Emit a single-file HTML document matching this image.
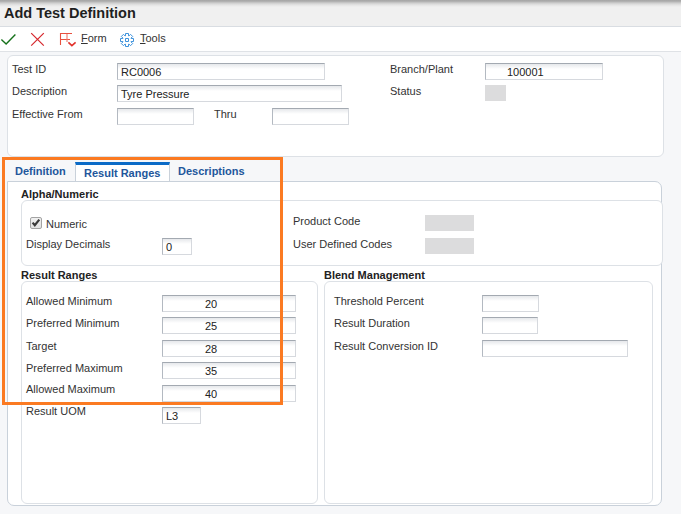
<!DOCTYPE html>
<html><head><meta charset="utf-8">
<style>
*{box-sizing:border-box;margin:0;padding:0}
html,body{width:681px;height:514px;overflow:hidden;background:#f6f7f9;font-family:"Liberation Sans",sans-serif;font-size:11px;color:#333}
.a{position:absolute;white-space:nowrap;line-height:13px}
#hdr{position:absolute;left:0;top:0;width:681px;height:27px;background:#f0f0f0;border-bottom:1px solid #d9dde2}
#shadow{position:absolute;left:0;top:0;width:681px;height:7px;background:linear-gradient(#a4a4a4,#b2b2b2 1.5px,#cdcdcd 3px,#e4e4e4 5px,#f0f0f0 7px)}
#title{position:absolute;left:4px;top:5px;font-size:14.5px;font-weight:bold;color:#1f1f1f;line-height:17px}
#tb{position:absolute;left:0;top:27px;width:681px;height:25px;background:#fff;border-bottom:1px solid #dfe2e6}
.box{position:absolute;background:#fff;border:1px solid #dde1e6;border-radius:6px}
.inp{position:absolute;border:1px solid #d6d9de;border-top-color:#a3a9b1;border-left-color:#b3b9c1;height:17px;background:linear-gradient(#e6e8eb,#fff 5px)}
.gray{position:absolute;background:#dcdcdd}
.lbl{position:absolute;white-space:nowrap;line-height:13px;color:#333}
.h{position:absolute;white-space:nowrap;line-height:13px;color:#222;font-weight:bold}
.tab{position:absolute;white-space:nowrap;line-height:13px;color:#22569b;font-weight:bold}
.val{position:absolute;white-space:nowrap;line-height:13px;color:#222}
</style></head><body>
<div id="hdr"></div>
<div id="shadow"></div>
<div id="title">Add Test Definition</div>
<div id="tb"></div>
<!-- toolbar icons -->
<svg style="position:absolute;left:0;top:28px" width="180" height="22" viewBox="0 28 180 22">
  <polyline points="1.4,39.5 6.1,43.9 15.4,34.4" fill="none" stroke="#15711a" stroke-width="1.4"/>
  <path d="M31.2,33.1 L43.8,45.6 M43.8,33.1 L31.2,45.6" stroke="#d6282e" stroke-width="1.25" fill="none"/>
  <path d="M60,33.5 H72 M60.5,33 V45 M60,39.5 H70" stroke="#e8503f" stroke-width="1.1" fill="none"/><path d="M67,34 V42" stroke="#ee7a6c" stroke-width="1.1" fill="none"/>
  <polyline points="68.4,42.3 71.9,45.6 75.6,42.4" fill="none" stroke="#e2312a" stroke-width="1.6"/>
  <g transform="translate(127,40)" fill="none" stroke="#3f93dc" stroke-width="1" stroke-linejoin="round">
    <path d="M-1.50,-4.14 L-1.50,-6.50 L1.50,-6.50 L1.50,-4.14 L1.86,-3.99 L3.54,-5.66 L5.66,-3.54 L3.99,-1.86 L4.14,-1.50 L6.50,-1.50 L6.50,1.50 L4.14,1.50 L3.99,1.86 L5.66,3.54 L3.54,5.66 L1.86,3.99 L1.50,4.14 L1.50,6.50 L-1.50,6.50 L-1.50,4.14 L-1.86,3.99 L-3.54,5.66 L-5.66,3.54 L-3.99,1.86 L-4.14,1.50 L-6.50,1.50 L-6.50,-1.50 L-4.14,-1.50 L-3.99,-1.86 L-5.66,-3.54 L-3.54,-5.66 L-1.86,-3.99 Z"/>
    <rect x="-1.5" y="-1.5" width="3" height="3"/>
  </g>
</svg>
<div class="a" style="left:81px;top:32px;color:#333"><u>F</u>orm</div>
<div class="a" style="left:140px;top:32px;color:#333"><u>T</u>ools</div>

<!-- form box -->
<div class="box" style="left:7px;top:55px;width:657px;height:102px"></div>
<div class="lbl" style="left:12px;top:63px">Test ID</div>
<div class="lbl" style="left:12px;top:85px">Description</div>
<div class="lbl" style="left:12px;top:108px">Effective From</div>
<div class="lbl" style="left:214px;top:108px">Thru</div>
<div class="lbl" style="left:390px;top:63px">Branch/Plant</div>
<div class="lbl" style="left:390px;top:85px">Status</div>
<div class="inp" style="left:117px;top:63px;width:208px"></div>
<div class="val" style="left:121px;top:66px">RC0006</div>
<div class="inp" style="left:117px;top:85px;width:225px"></div>
<div class="val" style="left:121px;top:88px">Tyre Pressure</div>
<div class="inp" style="left:117px;top:108px;width:77px"></div>
<div class="inp" style="left:272px;top:108px;width:77px"></div>
<div class="inp" style="left:485px;top:63px;width:118px"></div>
<div class="val" style="left:507px;top:66px">100001</div>
<div class="gray" style="left:485px;top:85px;width:21px;height:16px"></div>

<!-- tab strip -->
<div style="position:absolute;left:7px;top:181px;width:655px;height:325px;background:#fff;border:1px solid #c9d1da;border-radius:0 7px 7px 7px"></div>
<div style="position:absolute;left:75px;top:162px;width:95px;height:19px;background:#fff;border-left:1px solid #c9d1da;border-right:1px solid #c9d1da;border-top:3px solid #0b6bc7"></div>
<div class="tab" style="left:15px;top:165px">Definition</div>
<div class="tab" style="left:84px;top:167px">Result Ranges</div>
<div class="tab" style="left:178px;top:165px">Descriptions</div>

<!-- alpha numeric -->
<div class="h" style="left:21px;top:188px">Alpha/Numeric</div>
<div class="box" style="left:21px;top:200px;width:642px;height:66px"></div>
<div style="position:absolute;left:30px;top:217px;width:12px;height:12px;border:1px solid #a3a3a3;border-radius:2px;background:linear-gradient(#f0f0f0,#e2e2e2)"></div>
<svg style="position:absolute;left:30px;top:217px" width="12" height="12" viewBox="30 217 12 12"><polyline points="32.6,222.6 34.8,225.2 39.3,219.6" fill="none" stroke="#3a3a3a" stroke-width="2.2"/></svg>
<div class="lbl" style="left:46px;top:218px">Numeric</div>
<div class="lbl" style="left:26px;top:238px">Display Decimals</div>
<div class="inp" style="left:162px;top:238px;width:30px"></div>
<div class="val" style="left:166px;top:241px">0</div>
<div class="lbl" style="left:293px;top:215px">Product Code</div>
<div class="lbl" style="left:293px;top:238px">User Defined Codes</div>
<div class="gray" style="left:425px;top:215px;width:49px;height:16px"></div>
<div class="gray" style="left:425px;top:238px;width:49px;height:16px"></div>

<!-- result ranges -->
<div class="h" style="left:21px;top:269px">Result Ranges</div>
<div class="box" style="left:21px;top:281px;width:297px;height:223px"></div>
<div class="lbl" style="left:26px;top:295px">Allowed Minimum</div>
<div class="lbl" style="left:26px;top:317px">Preferred Minimum</div>
<div class="lbl" style="left:26px;top:340px">Target</div>
<div class="lbl" style="left:26px;top:362px">Preferred Maximum</div>
<div class="lbl" style="left:26px;top:383px">Allowed Maximum</div>
<div class="lbl" style="left:26px;top:405px">Result UOM</div>
<div class="inp" style="left:162px;top:295px;width:134px"></div>
<div class="inp" style="left:162px;top:317px;width:134px"></div>
<div class="inp" style="left:162px;top:340px;width:134px"></div>
<div class="inp" style="left:162px;top:362px;width:134px"></div>
<div class="inp" style="left:162px;top:385px;width:134px"></div>
<div class="inp" style="left:162px;top:407px;width:39px"></div>
<div class="val" style="left:162px;top:298px;width:98px;text-align:center">20</div>
<div class="val" style="left:162px;top:320px;width:98px;text-align:center">25</div>
<div class="val" style="left:162px;top:343px;width:98px;text-align:center">28</div>
<div class="val" style="left:162px;top:365px;width:98px;text-align:center">35</div>
<div class="val" style="left:162px;top:388px;width:98px;text-align:center">40</div>
<div class="val" style="left:166px;top:410px">L3</div>

<!-- blend -->
<div class="h" style="left:324px;top:269px">Blend Management</div>
<div class="box" style="left:324px;top:281px;width:329px;height:223px"></div>
<div class="lbl" style="left:334px;top:295px">Threshold Percent</div>
<div class="lbl" style="left:334px;top:317px">Result Duration</div>
<div class="lbl" style="left:334px;top:340px">Result Conversion ID</div>
<div class="inp" style="left:482px;top:295px;width:57px"></div>
<div class="inp" style="left:482px;top:317px;width:56px"></div>
<div class="inp" style="left:482px;top:340px;width:146px"></div>

<!-- orange highlight -->
<div style="position:absolute;left:2px;top:157px;width:281px;height:248px;border:3px solid #fb7a22"></div>
</body></html>
